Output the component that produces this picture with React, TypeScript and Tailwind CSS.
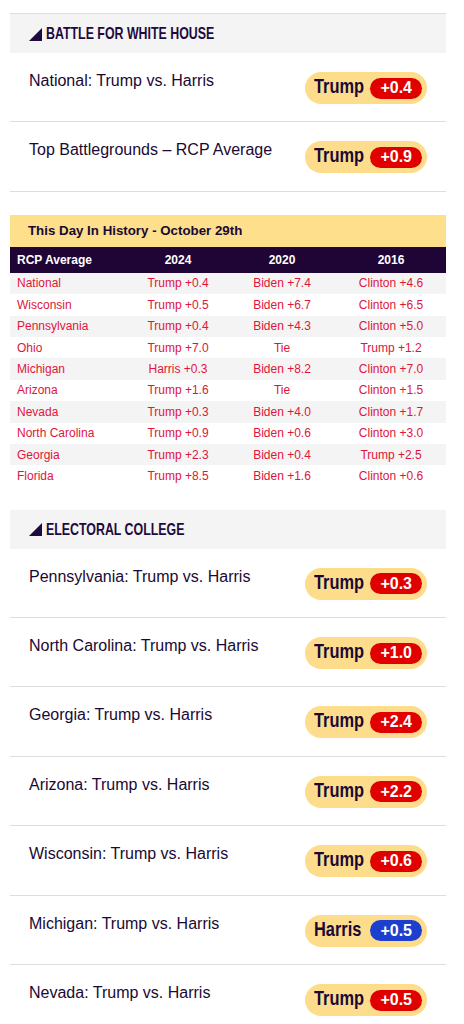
import React from 'react';

const sans = { fontFamily: '"Liberation Sans", Arial, sans-serif' };

const battle = [
  { title: 'National: Trump vs. Harris', who: 'Trump', spread: '+0.4' },
  { title: 'Top Battlegrounds – RCP Average', who: 'Trump', spread: '+0.9' },
];

const history = [
  ['National', 'Trump +0.4', 'Biden +7.4', 'Clinton +4.6'],
  ['Wisconsin', 'Trump +0.5', 'Biden +6.7', 'Clinton +6.5'],
  ['Pennsylvania', 'Trump +0.4', 'Biden +4.3', 'Clinton +5.0'],
  ['Ohio', 'Trump +7.0', 'Tie', 'Trump +1.2'],
  ['Michigan', 'Harris +0.3', 'Biden +8.2', 'Clinton +7.0'],
  ['Arizona', 'Trump +1.6', 'Tie', 'Clinton +1.5'],
  ['Nevada', 'Trump +0.3', 'Biden +4.0', 'Clinton +1.7'],
  ['North Carolina', 'Trump +0.9', 'Biden +0.6', 'Clinton +3.0'],
  ['Georgia', 'Trump +2.3', 'Biden +0.4', 'Trump +2.5'],
  ['Florida', 'Trump +8.5', 'Biden +1.6', 'Clinton +0.6'],
];

const electoral = [
  { title: 'Pennsylvania: Trump vs. Harris', who: 'Trump', spread: '+0.3' },
  { title: 'North Carolina: Trump vs. Harris', who: 'Trump', spread: '+1.0' },
  { title: 'Georgia: Trump vs. Harris', who: 'Trump', spread: '+2.4' },
  { title: 'Arizona: Trump vs. Harris', who: 'Trump', spread: '+2.2' },
  { title: 'Wisconsin: Trump vs. Harris', who: 'Trump', spread: '+0.6' },
  { title: 'Michigan: Trump vs. Harris', who: 'Harris', spread: '+0.5' },
  { title: 'Nevada: Trump vs. Harris', who: 'Trump', spread: '+0.5' },
];

// condensed look: no narrow font installed, so squeeze Liberation Sans bold
const SectionHeader = ({ label }: { label: string }) => (
  <div className="flex h-[39px] items-center bg-[#f4f4f4] pl-[19px]">
    <svg width="13" height="13" viewBox="0 0 13 13" className="mr-[4px] mt-[1px] shrink-0">
      <polygon points="0,13 13,0 13,13" fill="#1f0a3d" />
    </svg>
    <span className="inline-block origin-left scale-x-[0.75] whitespace-nowrap text-[16.5px] font-bold uppercase text-[#1f0a3d]">
      {label}
    </span>
  </div>
);

const Badge = ({ who, spread }: { who: string; spread: string }) => (
  <div className="flex h-[32px] items-center rounded-full bg-[#fddc8c] pl-[9px] pr-[5px]">
    <span className="mr-[5px] block w-[51px] whitespace-nowrap">
      <span className="inline-block origin-left scale-x-[0.8] text-[20.5px] font-bold leading-none text-[#1a0933]">
        {who}
      </span>
    </span>
    <span
      className={`flex h-[21px] items-center rounded-full px-[10px] text-[16px] font-bold text-white ${
        who === 'Harris' ? 'bg-[#1d3fd0]' : 'bg-[#e00000]'
      }`}
    >
      {spread}
    </span>
  </div>
);

const RaceRow = ({ title, who, spread }: { title: string; who: string; spread: string }) => (
  <div className="flex items-start justify-between border-b border-[#dedede] pb-[17.4px] pl-[19px] pr-[19px] pt-[18px]">
    <span className="text-[16px] leading-[20px] text-[#1a0933]">{title}</span>
    <div className="mt-[1px]">
      <Badge who={who} spread={spread} />
    </div>
  </div>
);

export default function App() {
  return (
    <div className="min-h-screen bg-white pt-[13px]" style={sans}>
      <div className="ml-[10px] mr-[18px] border-t border-[#dedede]">
        <SectionHeader label="Battle for White House" />
        {battle.map((r) => (
          <RaceRow key={r.title} {...r} />
        ))}

        {/* This day in history */}
        <div className="mt-[23px]">
          <div className="flex h-[32px] items-center bg-[#fddf8c] pl-[18px] text-[13.3px] font-bold text-[#1a0933]">
            This Day In History - October 29th
          </div>
          <div className="grid h-[26px] grid-cols-[118px_100px_108px_1fr] items-center bg-[#1f0536] text-[12px] font-bold text-white">
            <span className="pl-[7px]">RCP Average</span>
            <span className="text-center">2024</span>
            <span className="text-center">2020</span>
            <span className="text-center">2016</span>
          </div>
          {history.map((row, i) => (
            <div
              key={row[0]}
              className={`grid h-[21.4px] grid-cols-[118px_100px_108px_1fr] items-center text-[12px] text-[#e0143c] ${
                i % 2 === 0 ? 'bg-[#f4f4f4]' : 'bg-white'
              }`}
            >
              <span className="pl-[7px]">{row[0]}</span>
              <span className="text-center">{row[1]}</span>
              <span className="text-center">{row[2]}</span>
              <span className="text-center">{row[3]}</span>
            </div>
          ))}
        </div>

        <div className="mt-[23px]">
          <SectionHeader label="Electoral College" />
          {electoral.map((r) => (
            <RaceRow key={r.title} {...r} />
          ))}
        </div>
      </div>
    </div>
  );
}
